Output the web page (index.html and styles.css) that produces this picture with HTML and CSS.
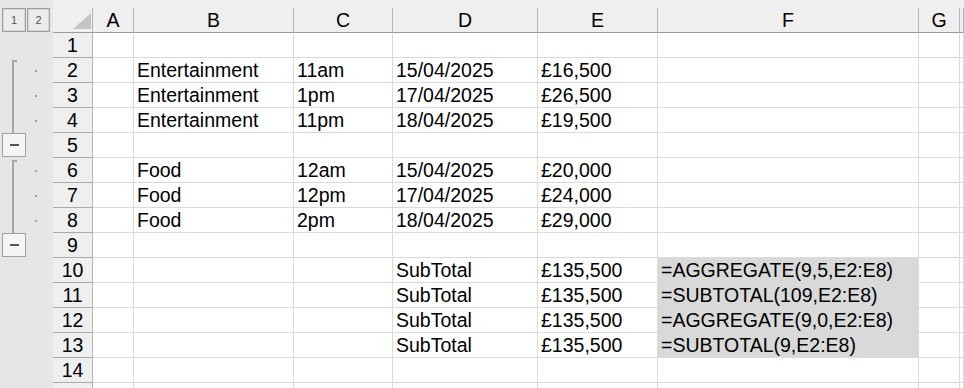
FILE: index.html
```html
<!DOCTYPE html>
<html lang="en">
<head>
    <meta charset="UTF-8">
    <title>Subtotal vs Aggregate</title>
    <link rel="stylesheet" href="styles.css">
</head>
<body>
    <div class="window">
        <!-- Outline (grouping) bar -->
        <div class="outline">
            <div class="level lv1">1</div>
            <div class="level lv2">2</div>

            <div class="bracket g1"></div>
            <div class="dot r2"></div>
            <div class="dot r3"></div>
            <div class="dot r4"></div>
            <div class="collapse r5"><span></span></div>

            <div class="bracket g2"></div>
            <div class="dot r6"></div>
            <div class="dot r7"></div>
            <div class="dot r8"></div>
            <div class="collapse r9"><span></span></div>
        </div>

        <!-- Sheet -->
        <div class="sheet">
            <div class="strip"></div>

            <div class="corner"><span></span></div>
            <div class="col">A</div>
            <div class="col">B</div>
            <div class="col">C</div>
            <div class="col">D</div>
            <div class="col">E</div>
            <div class="col">F</div>
            <div class="col">G</div>
            <div class="col"></div>

            <div class="rh">1</div>
            <div class="c"></div><div class="c"></div><div class="c"></div><div class="c"></div><div class="c"></div><div class="c"></div><div class="c"></div><div class="c"></div>

            <div class="rh">2</div>
            <div class="c"></div><div class="c">Entertainment</div><div class="c">11am</div><div class="c">15/04/2025</div><div class="c">£16,500</div><div class="c"></div><div class="c"></div><div class="c"></div>

            <div class="rh">3</div>
            <div class="c"></div><div class="c">Entertainment</div><div class="c">1pm</div><div class="c">17/04/2025</div><div class="c">£26,500</div><div class="c"></div><div class="c"></div><div class="c"></div>

            <div class="rh">4</div>
            <div class="c"></div><div class="c">Entertainment</div><div class="c">11pm</div><div class="c">18/04/2025</div><div class="c">£19,500</div><div class="c"></div><div class="c"></div><div class="c"></div>

            <div class="rh">5</div>
            <div class="c"></div><div class="c"></div><div class="c"></div><div class="c"></div><div class="c"></div><div class="c"></div><div class="c"></div><div class="c"></div>

            <div class="rh">6</div>
            <div class="c"></div><div class="c">Food</div><div class="c">12am</div><div class="c">15/04/2025</div><div class="c">£20,000</div><div class="c"></div><div class="c"></div><div class="c"></div>

            <div class="rh">7</div>
            <div class="c"></div><div class="c">Food</div><div class="c">12pm</div><div class="c">17/04/2025</div><div class="c">£24,000</div><div class="c"></div><div class="c"></div><div class="c"></div>

            <div class="rh">8</div>
            <div class="c"></div><div class="c">Food</div><div class="c">2pm</div><div class="c">18/04/2025</div><div class="c">£29,000</div><div class="c"></div><div class="c"></div><div class="c"></div>

            <div class="rh">9</div>
            <div class="c"></div><div class="c"></div><div class="c"></div><div class="c"></div><div class="c"></div><div class="c"></div><div class="c"></div><div class="c"></div>

            <div class="rh">10</div>
            <div class="c"></div><div class="c"></div><div class="c"></div><div class="c">SubTotal</div><div class="c">£135,500</div><div class="c fill">=AGGREGATE(9,5,E2:E8)</div><div class="c"></div><div class="c"></div>

            <div class="rh">11</div>
            <div class="c"></div><div class="c"></div><div class="c"></div><div class="c">SubTotal</div><div class="c">£135,500</div><div class="c fill">=SUBTOTAL(109,E2:E8)</div><div class="c"></div><div class="c"></div>

            <div class="rh">12</div>
            <div class="c"></div><div class="c"></div><div class="c"></div><div class="c">SubTotal</div><div class="c">£135,500</div><div class="c fill">=AGGREGATE(9,0,E2:E8)</div><div class="c"></div><div class="c"></div>

            <div class="rh">13</div>
            <div class="c"></div><div class="c"></div><div class="c"></div><div class="c">SubTotal</div><div class="c">£135,500</div><div class="c fill last">=SUBTOTAL(9,E2:E8)</div><div class="c"></div><div class="c"></div>

            <div class="rh">14</div>
            <div class="c"></div><div class="c"></div><div class="c"></div><div class="c"></div><div class="c"></div><div class="c"></div><div class="c"></div><div class="c"></div>

            <div class="rh"></div>
            <div class="c"></div><div class="c"></div><div class="c"></div><div class="c"></div><div class="c"></div><div class="c"></div><div class="c"></div><div class="c"></div>
        </div>
    </div>
</body>
</html>
```

FILE: styles.css
```css
body {
    margin: 0;
    background-color: white;
    font-family: "Liberation Sans", Arial, sans-serif;
    font-size: 19.5px;
    color: black;
    overflow: hidden;
}

.window {
    display: flex;
    height: 388px;
    overflow: hidden;
}

/* Outline bar on the left */
.outline {
    width: 53px;
    flex-shrink: 0;
    background-color: #e6e6e6;
    display: grid;
    grid-template-columns: 26px 20px 7px;
    grid-template-rows: 8px 25px repeat(15, 25px);
}
.level {
    grid-row: 2;
    height: 24px;
    box-sizing: border-box;
    border: 1px solid #a0a0a0;
    box-shadow: inset 0 0 0 1px #d4d4d4;
    background-color: #ececec;
    color: #555;
    font-size: 11px;
    display: flex;
    align-items: center;
    justify-content: center;
}
.lv1 {
    grid-column: 1;
    margin-left: 2px;
}
.lv2 {
    grid-column: 2 / 4;
    margin-left: 1px;
    width: 23px;
}
.bracket {
    grid-column: 1;
    margin: 2px 0 0 12px;
    width: 3px;
    border-left: 2px solid #a6a6a6;
    border-top: 2px solid #a6a6a6;
}
.g1 { grid-row: 4 / 7; }
.g2 { grid-row: 8 / 11; }
.dot {
    grid-column: 2;
    width: 2px;
    height: 2px;
    background-color: #a0a0a0;
    place-self: center;
}
.collapse {
    grid-column: 1;
    margin-left: 2px;
    width: 24px;
    height: 24px;
    box-sizing: border-box;
    border: 1px solid #a0a0a0;
    background-color: #f5f5f5;
    display: flex;
    align-items: center;
    justify-content: center;
}
.collapse span {
    width: 9px;
    height: 2px;
    background-color: #555;
}
.r2 { grid-row: 4; }
.r3 { grid-row: 5; }
.r4 { grid-row: 6; }
.r5 { grid-row: 7; }
.r6 { grid-row: 8; }
.r7 { grid-row: 9; }
.r8 { grid-row: 10; }
.r9 { grid-row: 11; }

/* Sheet grid */
.sheet {
    flex: 1;
    display: grid;
    grid-template-columns: 40px 41px 160px 99px 145px 120px 261px 41px 1fr;
    grid-template-rows: 8px 25px repeat(15, 25px);
}
.strip {
    grid-column: 1 / -1;
    background-color: #efefef;
}
.corner,
.col,
.rh {
    background-color: #efefef;
    box-sizing: border-box;
    border-right: 1px solid #b4b4b4;
    border-bottom: 1px solid #ababab;
    text-align: center;
    line-height: 23px;
    padding-top: 1px;
}
.col {
    border-bottom-color: #9b9b9b;
}
.corner {
    border-bottom-color: #9b9b9b;
    display: flex;
    align-items: flex-end;
    justify-content: flex-end;
    padding: 0 1px 3px 0;
}
.corner span {
    width: 18px;
    height: 16px;
    background-color: #c4c4c4;
    clip-path: polygon(100% 0, 100% 100%, 0 100%);
}
.c {
    box-sizing: border-box;
    border-right: 1px solid #dadada;
    border-bottom: 1px solid #dadada;
    padding: 1px 0 0 3px;
    line-height: 23px;
    white-space: nowrap;
}
.fill {
    background-color: #d9d9d9;
    border-bottom-color: #d9d9d9;
}
.fill.last {
    border-bottom-color: #dadada;
}
```
